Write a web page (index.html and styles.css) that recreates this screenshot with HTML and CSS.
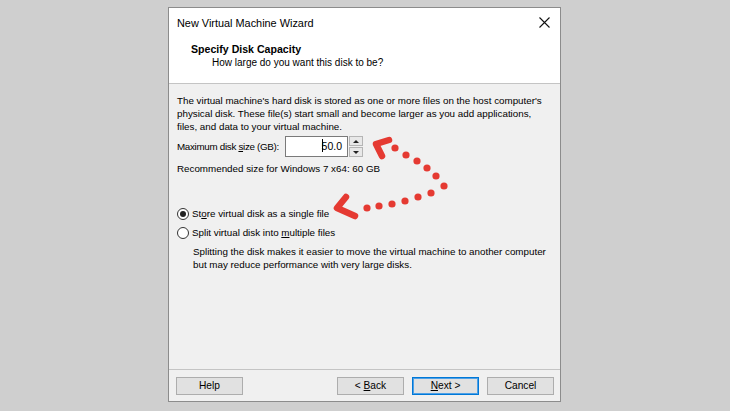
FILE: index.html
```html
<!DOCTYPE html>
<html lang="en">
<head>
    <meta charset="UTF-8">
    <meta name="viewport" content="width=device-width, initial-scale=1.0">
    <title>New Virtual Machine Wizard</title>
    <link rel="stylesheet" href="styles.css">
</head>
<body>
    <div class="dialog">
        <div class="header">
            <div class="titlebar">
                <span class="title">New Virtual Machine Wizard</span>
                <svg class="close" width="11" height="11" viewBox="0 0 11 11">
                    <path d="M0.5 0.5 L10.5 10.5 M10.5 0.5 L0.5 10.5" stroke="#111" stroke-width="1.1" fill="none"/>
                </svg>
            </div>
            <div class="heading">Specify Disk Capacity</div>
            <div class="subheading">How large do you want this disk to be?</div>
        </div>

        <div class="content">
            <p class="intro">The virtual machine's hard disk is stored as one or more files on the host computer's
                physical disk. These file(s) start small and become larger as you add applications,
                files, and data to your virtual machine.</p>

            <div class="size-row">
                <label for="size">Maximum disk <u>s</u>ize (GB):</label>
                <div class="spin">
                    <div class="spin-input" id="size"><span class="caret"></span>50.0</div>
                    <div class="spin-buttons">
                        <div class="spin-btn"><span class="tri-up"></span></div>
                        <div class="spin-btn"><span class="tri-down"></span></div>
                    </div>
                </div>
            </div>
            <p class="recommended">Recommended size for Windows 7 x64: 60 GB</p>

            <div class="radio-group">
                <div class="radio-row">
                    <span class="radio checked"></span>
                    <span>St<u>o</u>re virtual disk as a single file</span>
                </div>
                <div class="radio-row">
                    <span class="radio"></span>
                    <span>Split virtual disk into <u>m</u>ultiple files</span>
                </div>
                <p class="radio-note">Splitting the disk makes it easier to move the virtual machine to another computer
                    but may reduce performance with very large disks.</p>
            </div>
        </div>

        <div class="footer">
            <button class="btn">Help</button>
            <div class="nav">
                <button class="btn">&lt; <u>B</u>ack</button>
                <button class="btn default"><u>N</u>ext &gt;</button>
                <button class="btn">Cancel</button>
            </div>
        </div>
    </div>

    <!-- red dotted callout between the size box and the first option -->
    <svg class="callout" width="730" height="411" viewBox="0 0 730 411">
        <g fill="#e53a32">
            <circle cx="395" cy="148" r="3.6"/>
            <circle cx="406" cy="155" r="3.6"/>
            <circle cx="417" cy="161" r="3.6"/>
            <circle cx="427" cy="168" r="3.6"/>
            <circle cx="436" cy="176" r="3.6"/>
            <circle cx="444" cy="186" r="3.6"/>
            <circle cx="431" cy="193" r="3.6"/>
            <circle cx="418" cy="197" r="3.6"/>
            <circle cx="405" cy="201" r="3.6"/>
            <circle cx="392" cy="204" r="3.6"/>
            <circle cx="379" cy="206" r="3.6"/>
            <circle cx="367" cy="208" r="3.6"/>
        </g>
        <g stroke="#e53a32" stroke-width="6.5" stroke-linecap="round" stroke-linejoin="round" fill="none">
            <path d="M389 140 L376 144 L382 156"/>
            <path d="M346 197 L337 208 L355 216"/>
        </g>
    </svg>
</body>
</html>
```

FILE: styles.css
```css
body {
    margin: 0;
    background-color: #cfcfcf;
    font-family: "Liberation Sans", Arial, sans-serif;
    font-size: 9.8px;
    color: #000;
    height: 411px;
    overflow: hidden;
}
p {
    margin: 0;
}
u {
    text-decoration-thickness: 1px;
    text-underline-offset: 1px;
}
.dialog {
    margin: 7px 0 0 168px;
    width: 391px;
    height: 393px;
    border: 1px solid #8c8c8c;
    background-color: #f0f0f0;
    display: flex;
    flex-direction: column;
}
.header {
    background: #fff;
    height: 75px;
    border-bottom: 1px solid #c4c4c4;
}
.titlebar {
    height: 28px;
    display: flex;
    align-items: center;
    justify-content: space-between;
    padding: 0 10px 0 8px;
}
.title {
    font-size: 10.9px;
    padding-top: 1px;
}
.heading {
    font-weight: bold;
    font-size: 10.6px;
    padding: 6px 0 0 22px;
    line-height: 14px;
}
.subheading {
    padding: 0 0 0 43px;
    line-height: 14px;
    font-size: 10px;
}
.content {
    flex: 1;
    padding: 10px 8px 0 8px;
    line-height: 13px;
}
.size-row {
    display: flex;
    align-items: center;
    margin-top: 3px;
    gap: 6px;
}
.size-row label {
    letter-spacing: -0.3px;
}
.spin {
    display: flex;
    height: 21px;
}
.spin-input {
    width: 56px;
    height: 19px;
    border: 1px solid #7a7a7a;
    background: #fff;
    text-align: right;
    padding-right: 5px;
    line-height: 19px;
    font-size: 10.5px;
}
.caret {
    display: inline-block;
    width: 1px;
    height: 13px;
    background: #000;
    vertical-align: -2px;
    margin-right: -1px;
}
.spin-buttons {
    width: 14px;
    display: flex;
    flex-direction: column;
    gap: 1px;
    padding-left: 1px;
}
.spin-btn {
    flex: 1;
    background: #e8e8e8;
    border: 1px solid #b5b5b5;
    display: flex;
    align-items: center;
    justify-content: center;
}
.tri-up, .tri-down {
    width: 0;
    height: 0;
    border-left: 3px solid transparent;
    border-right: 3px solid transparent;
}
.tri-up {
    border-bottom: 3px solid #222;
}
.tri-down {
    border-top: 3px solid #222;
}
.recommended {
    margin-top: 5px;
}
.radio-group {
    margin-top: 32px;
}
.radio-row {
    display: flex;
    align-items: center;
    gap: 3px;
    height: 13px;
    margin-bottom: 6px;
}
.radio {
    width: 10px;
    height: 10px;
    border: 1px solid #333;
    border-radius: 50%;
    background: #fff;
    display: flex;
    align-items: center;
    justify-content: center;
}
.radio.checked::after {
    content: "";
    width: 6px;
    height: 6px;
    border-radius: 50%;
    background: #222;
}
.radio-note {
    padding-left: 16px;
    margin-top: 5px;
}
.footer {
    border-top: 1px solid #c4c4c4;
    height: 31px;
    display: flex;
    align-items: center;
    justify-content: space-between;
    padding: 0 6px 0 7px;
}
.nav {
    display: flex;
    gap: 8px;
}
.btn {
    width: 67px;
    height: 18px;
    background: #e1e1e1;
    border: 1px solid #adadad;
    font-family: inherit;
    font-size: 10.2px;
    padding: 0;
    color: #000;
}
.btn.default {
    border: 1px solid #0078d7;
    box-shadow: inset 0 0 0 1px #4ea0e6;
}
.callout {
    position: absolute;
    left: 0;
    top: 0;
    pointer-events: none;
}
```
